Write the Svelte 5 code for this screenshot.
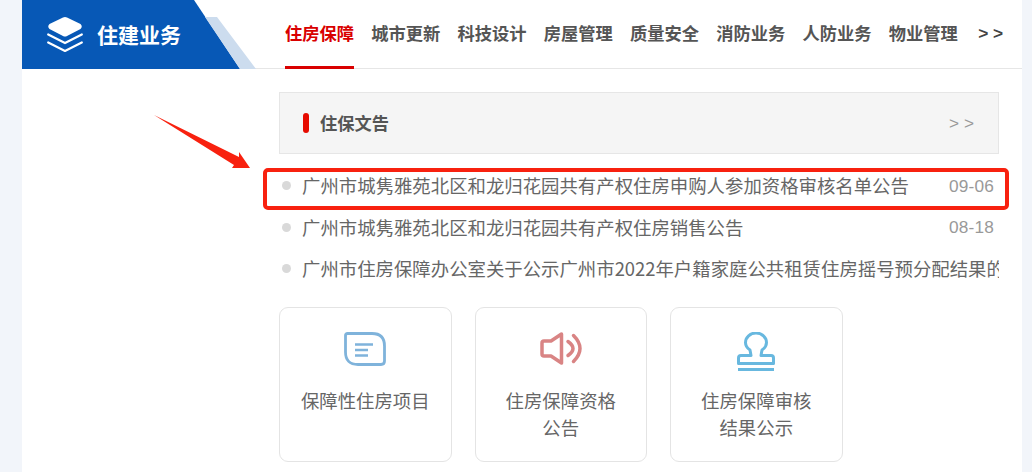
<script>
  const tabs = ['住房保障', '城市更新', '科技设计', '房屋管理', '质量安全', '消防业务', '人防业务', '物业管理'];
  const notices = [
    { title: '广州市城隽雅苑北区和龙归花园共有产权住房申购人参加资格审核名单公告', date: '09-06' },
    { title: '广州市城隽雅苑北区和龙归花园共有产权住房销售公告', date: '08-18' },
    { title: '广州市住房保障办公室关于公示广州市2022年户籍家庭公共租赁住房摇号预分配结果的通告', date: '' }
  ];
</script>

<div class="page">
  <header class="header">
    <div class="brand">
      <svg class="brand-icon" width="36" height="35" viewBox="0 0 36 35">
        <path d="M18 0 Q19 0 20 .5 L33.5 7 Q36 9.5 33.5 12 L20 19 Q18 20 16 19 L2.5 12 Q0 9.5 2.5 7 L16 .5 Q17 0 18 0 Z" fill="#fff" />
        <path d="M1.2 17.5 L18 26 L34.8 17.5 M1.2 25.5 L18 34 L34.8 25.5" fill="none" stroke="#fff" stroke-width="2.2" stroke-linecap="round" />
      </svg>
      <span class="brand-name">住建业务</span>
    </div>
    <nav class="tabs">
      {#each tabs as tab, i}
        <a class="tab" class:active={i === 0}>{tab}</a>
      {/each}
      <a class="tab more">&gt; &gt;</a>
    </nav>
  </header>

  <main class="content">
    <div class="notice-head">
      <span class="mark"></span>
      <h2>住保文告</h2>
      <span class="head-more">&gt; &gt;</span>
    </div>

    <ul class="notices">
      {#each notices as n}
        <li>
          <i class="dot"></i>
          <span class="title">{n.title}</span>
          {#if n.date}<span class="date">{n.date}</span>{/if}
        </li>
      {/each}
    </ul>

    <div class="cards">
      <div class="card">
        <svg width="42" height="34" viewBox="0 0 42 34" fill="none" stroke="#7fb3db" stroke-width="2.8">
          <path d="M3.5 1.5 H28 Q40.5 1.5 40.5 14 V29 Q40.5 32.5 37 32.5 H14 Q1.5 32.5 1.5 20 V3.5 Q1.5 1.5 3.5 1.5 Z" />
          <path d="M11 12.5 H29 M11 18 H24 M11 23.5 H24" stroke-width="2.4" />
        </svg>
        <p>保障性住房项目</p>
      </div>
      <div class="card">
        <svg width="42" height="34" viewBox="0 0 42 34" fill="none" stroke="#d98484" stroke-width="3.5" stroke-linejoin="round" stroke-linecap="round">
          <path d="M21.5 2 L11 9 H4 Q2 9 2 11 V22 Q2 24 4 24 H11 L21.5 31 Z" />
          <path d="M28 9.5 Q38 16.5 28 23.5" />
          <path d="M33.5 3.5 Q46.5 16.5 33.5 29.5" />
        </svg>
        <p>住房保障资格<br />公告</p>
      </div>
      <div class="card">
        <svg class="stamp" width="38" height="40" viewBox="0 0 38 40" fill="none" stroke="#68b8df" stroke-width="3" stroke-linejoin="round">
          <path d="M13 18 L14 23.5 H4 Q1.5 23.5 1.5 26 V31.5 H36.5 V26 Q36.5 23.5 34 23.5 H24 L25 18 Q29.5 15 29.5 10.5 A10.5 9.5 0 0 0 8.5 10.5 Q8.5 15 13 18 Z" />
          <path d="M1 37.5 H37" stroke-width="2.8" />
        </svg>
        <p>住房保障审核<br />结果公示</p>
      </div>
    </div>
  </main>

  <!-- annotation drawn over the screenshot -->
  <div class="callout"></div>
  <svg class="arrow" width="100" height="56" viewBox="0 0 100 56">
    <path d="M0 0 L85 42 L85 37 L96 53 L78 53 L80 50 Z" fill="#f8210f" />
  </svg>
</div>

<style>
  :global(body) {
    background: #f2f5fa;
    font-family: "Noto Sans CJK SC", "Liberation Sans", sans-serif;
  }
  .page {
    position: relative;
    width: 1000px;
    height: 472px;
    margin-left: 22px;
    background: #fff;
    overflow: hidden;
  }
  .header {
    display: flex;
    height: 69px;
    box-sizing: border-box;
    border-bottom: 1px solid #e6e6e6;
  }
  .brand {
    position: relative;
    flex: 0 0 234px;
    height: 69px;
    display: flex;
    align-items: center;
    padding-left: 25px;
    box-sizing: border-box;
  }
  .brand::before {
    content: "";
    position: absolute;
    inset: 0;
    background: #0758b6;
    clip-path: polygon(0 0, 172px 0, 218px 100%, 0 100%);
  }
  .brand::after {
    content: "";
    position: absolute;
    inset: 0;
    background: #ccdcee;
    clip-path: polygon(183px 17px, 195px 17px, 234px 100%, 218px 100%);
  }
  .brand-icon {
    position: relative;
    z-index: 1;
  }
  .brand-name {
    position: relative;
    z-index: 1;
    margin: 0 0 2px 14px;
    color: #fff;
    font-size: 21px;
    font-weight: 700;
  }
  .tabs {
    display: flex;
    gap: 17.25px;
    padding-left: 29px;
    white-space: nowrap;
  }
  .tab {
    height: 69px;
    box-sizing: border-box;
    line-height: 66px;
    font-size: 17.25px;
    font-weight: 700;
    color: #555;
  }
  .tab.active {
    color: #d90000;
    border-bottom: 3px solid #d90000;
  }
  .tab.more {
    margin-left: 3px;
    font-family: "Liberation Sans", sans-serif;
    color: #444;
  }
  .content {
    padding: 23px 23px 0 257px;
  }
  .notice-head {
    display: flex;
    align-items: center;
    height: 62px;
    box-sizing: border-box;
    padding: 0 24px 0 23px;
    background: #f5f5f5;
    border: 1px solid #e6e6e6;
  }
  .mark {
    width: 6px;
    height: 20px;
    border-radius: 3px;
    background: #e60b00;
  }
  h2 {
    flex: 1;
    margin: 0 0 2px 11px;
    font-size: 17.25px;
    font-weight: 700;
    color: #555;
  }
  .head-more {
    margin-top: 1px;
    font-family: "Liberation Sans", sans-serif;
    font-size: 17.25px;
    color: #999;
  }
  .notices {
    list-style: none;
    margin: 11px 0 0;
    padding: 0;
  }
  li {
    display: flex;
    align-items: center;
    height: 41.5px;
    color: #666;
    font-size: 18.4px;
    white-space: nowrap;
  }
  .dot {
    flex: none;
    width: 9px;
    height: 9px;
    margin: 0 11px 0 3px;
    border-radius: 50%;
    background: #d9d9d9;
  }
  .title {
    flex: 1;
    min-width: 0;
    overflow: hidden;
    margin-bottom: 1px;
  }
  .date {
    margin-top: 1px;
    padding-right: 5px;
    font-family: "Liberation Sans", sans-serif;
    font-size: 17.25px;
    letter-spacing: 0.2px;
    color: #999;
  }
  .cards {
    display: flex;
    gap: 23px;
    margin-top: 17px;
  }
  .card {
    flex: 0 0 172.5px;
    height: 155px;
    box-sizing: border-box;
    border: 1px solid #e4e4e4;
    border-radius: 9px;
    padding-top: 24px;
    text-align: center;
  }
  .card svg {
    display: block;
    margin: 0 auto;
  }
  .card p {
    margin: 0;
    padding-top: 21px;
    font-size: 18.4px;
    line-height: 27px;
    color: #666;
  }
  .card .stamp + p {
    padding-top: 15px;
  }
  .callout {
    position: absolute;
    left: 241px;
    top: 168px;
    width: 746px;
    height: 42px;
    box-sizing: border-box;
    border: 4.5px solid #f8210f;
    border-radius: 5px;
  }
  .arrow {
    position: absolute;
    left: 132px;
    top: 115px;
  }
</style>
